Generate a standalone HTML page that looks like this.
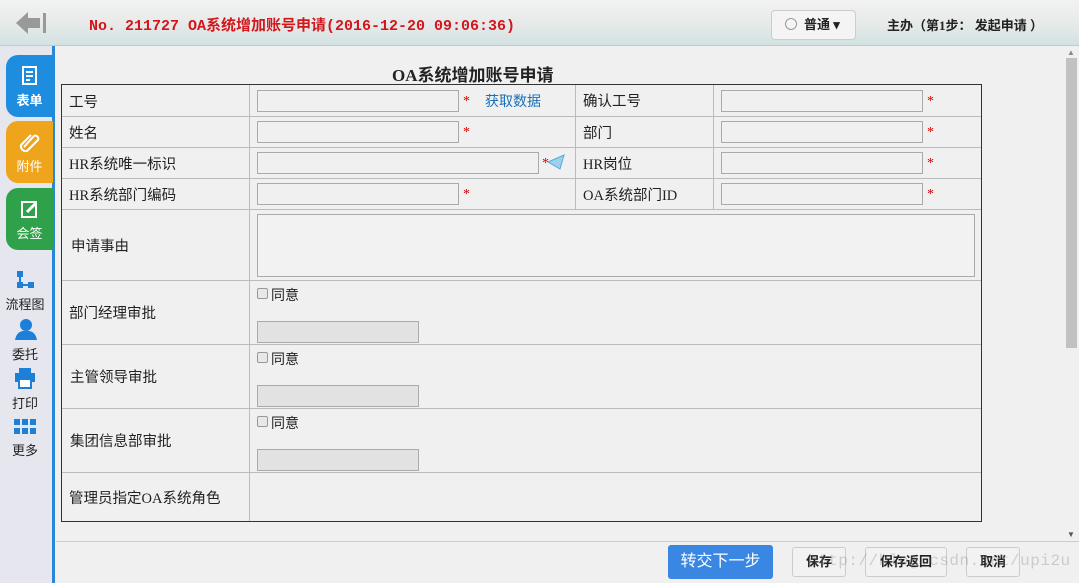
<!DOCTYPE html>
<html><head><meta charset="utf-8"><style>
*{margin:0;padding:0;box-sizing:border-box}
body{width:1079px;height:583px;overflow:hidden;background:#f0f0f0;font-family:"Liberation Serif","Noto Sans CJK SC",sans-serif;font-size:14px;color:#222;position:relative}
.a{position:absolute}
.hd{left:0;top:0;width:1079px;height:46px;background:linear-gradient(#f2f2f2,#e8eaea 50%,#d3e2e2);border-bottom:1px solid #c8c8c8}
.title{left:89px;top:14px;color:#d2161b;font-weight:bold;font-family:"Liberation Mono","Noto Sans CJK SC",monospace;font-size:15px}
.side{left:0;top:46px;width:55px;height:537px;background:#e6e6ef;border-right:3px solid #2a87d8}
.tab{left:6px;width:47px;height:62px;border-radius:12px 0 0 12px;color:#fff;text-align:center;font-size:13px;font-family:"Liberation Sans","Noto Sans CJK SC",sans-serif}
.ic{left:0;width:50px;text-align:center;font-size:13px;color:#222}
.ln{background:#bbb}
.inp{height:22px;border:1px solid #aaa;background:#f0f0f0}
.st{color:#c00;font-size:14px}
.lb{font-size:14.5px}
.btn{top:547px;height:30px;border:1px solid #ccc;border-radius:3px;background:#f2f2f2;font-weight:bold;font-size:13px;text-align:center;line-height:28px}
</style></head><body>
<div class="a hd"></div>
<svg class="a" style="left:14px;top:10px" width="34" height="26"><polygon points="2,13 14,2 14,8 26,8 26,18 14,18 14,24" fill="#999"/><rect x="29" y="3" width="3" height="20" fill="#999"/></svg>
<div class="a title">No. 211727 OA系统增加账号申请(2016-12-20 09:06:36)</div>
<div class="a" style="left:771px;top:10px;width:85px;height:30px;border:1px solid #ccc;border-radius:4px;background:#f4f4f4;font-weight:bold;font-size:13px;line-height:28px;padding-left:32px">普通 ▾</div>
<div class="a" style="left:785px;top:18px;width:12px;height:12px;border:1px solid #999;border-radius:50%"></div>
<div class="a" style="left:887px;top:15px;font-weight:bold;font-size:13px">主办（第1步：&nbsp;发起申请 ）</div>
<div class="a side"></div>
<div class="a tab" style="top:55px;background:#1e8de0">
<svg width="20" height="22" style="margin-top:10px"><rect x="3" y="2" width="13" height="17" fill="none" stroke="#fff" stroke-width="2"/><path d="M6 7h7M6 11h7M6 15h4" stroke="#fff" stroke-width="2"/></svg><div style="font-weight:bold">表单</div></div>
<div class="a tab" style="top:121px;background:#eea51c">
<svg width="24" height="22" style="margin-top:10px"><path d="M6 16 L16 5 a3 3 0 0 1 4 4 L9 20 a5 5 0 0 1 -6 -6 L13 4" fill="none" stroke="#fff" stroke-width="2"/></svg><div>附件</div></div>
<div class="a tab" style="top:188px;background:#2fa14a">
<svg width="22" height="22" style="margin-top:10px"><rect x="3" y="4" width="14" height="15" fill="none" stroke="#fff" stroke-width="2"/><path d="M8 14 L17 5" stroke="#fff" stroke-width="3"/></svg><div>会签</div></div>
<div class="a ic" style="top:270px"><svg width="22" height="20"><rect x="3" y="1" width="6" height="6" fill="#1e7fd8"/><rect x="3" y="12" width="6" height="6" fill="#1e7fd8"/><rect x="14" y="12" width="6" height="6" fill="#1e7fd8"/><path d="M6 7v8h8" stroke="#1e7fd8" stroke-width="2" fill="none"/></svg><div>流程图</div></div>
<div class="a ic" style="top:318px"><svg width="24" height="22"><circle cx="13" cy="7" r="6" fill="#1e7fd8"/><path d="M2 22 Q4 12 13 13 Q22 12 24 22Z" fill="#1e7fd8"/></svg><div>委托</div></div>
<div class="a ic" style="top:367px"><svg width="24" height="22"><rect x="6" y="1" width="12" height="5" fill="#1e7fd8"/><rect x="2" y="6" width="20" height="9" fill="#1e7fd8"/><rect x="6" y="12" width="12" height="9" fill="#fff" stroke="#1e7fd8" stroke-width="2"/></svg><div>打印</div></div>
<div class="a ic" style="top:418px"><svg width="24" height="18"><g fill="#1e7fd8"><rect x="1" y="1" width="6" height="6"/><rect x="9" y="1" width="6" height="6"/><rect x="17" y="1" width="6" height="6"/><rect x="1" y="10" width="6" height="6"/><rect x="9" y="10" width="6" height="6"/><rect x="17" y="10" width="6" height="6"/></g></svg><div>更多</div></div>

<div class="a" style="left:392px;top:61px;font-size:17px;font-weight:bold;font-family:'Liberation Serif','Noto Sans CJK SC',serif">OA系统增加账号申请</div>
<div class="a" style="left:61px;top:84px;width:921px;height:438px;border:1px solid #333"></div>
<div class="a ln" style="left:62px;top:116px;width:919px;height:1px"></div>
<div class="a ln" style="left:62px;top:147px;width:919px;height:1px"></div>
<div class="a ln" style="left:62px;top:178px;width:919px;height:1px"></div>
<div class="a ln" style="left:62px;top:209px;width:919px;height:1px"></div>
<div class="a ln" style="left:62px;top:280px;width:919px;height:1px"></div>
<div class="a ln" style="left:62px;top:344px;width:919px;height:1px"></div>
<div class="a ln" style="left:62px;top:408px;width:919px;height:1px"></div>
<div class="a ln" style="left:62px;top:472px;width:919px;height:1px"></div>
<div class="a ln" style="left:249px;top:85px;width:1px;height:436px"></div>
<div class="a ln" style="left:575px;top:85px;width:1px;height:124px"></div>
<div class="a ln" style="left:713px;top:85px;width:1px;height:124px"></div>
<div class="a lb" style="left:69px;top:91px">工号</div>
<div class="a lb" style="left:69px;top:122px">姓名</div>
<div class="a lb" style="left:69px;top:153px">HR系统唯一标识</div>
<div class="a lb" style="left:69px;top:184px">HR系统部门编码</div>
<div class="a lb" style="left:71px;top:235px">申请事由</div>
<div class="a lb" style="left:69px;top:302px">部门经理审批</div>
<div class="a lb" style="left:70px;top:366px">主管领导审批</div>
<div class="a lb" style="left:70px;top:430px">集团信息部审批</div>
<div class="a lb" style="left:69px;top:487px">管理员指定OA系统角色</div>
<div class="a lb" style="left:583px;top:90px">确认工号</div>
<div class="a lb" style="left:583px;top:122px">部门</div>
<div class="a lb" style="left:583px;top:153px">HR岗位</div>
<div class="a lb" style="left:583px;top:184px">OA系统部门ID</div>
<div class="a inp" style="left:257px;top:90px;width:202px"></div><div class="a st" style="left:463px;top:94px">*</div>
<div class="a" style="left:485px;top:91px;color:#1a6fb8;font-size:14px">获取数据</div>
<div class="a inp" style="left:257px;top:121px;width:202px"></div><div class="a st" style="left:463px;top:125px">*</div>
<div class="a inp" style="left:257px;top:152px;width:282px"></div><div class="a st" style="left:542px;top:156px">*</div>
<svg class="a" style="left:546px;top:153px" width="20" height="18"><path d="M2 9 L18 2 L14 16Z" fill="#9cd0ef" stroke="#5aa8d8"/></svg>
<div class="a inp" style="left:257px;top:183px;width:202px"></div><div class="a st" style="left:463px;top:187px">*</div>
<div class="a inp" style="left:721px;top:90px;width:202px"></div><div class="a st" style="left:927px;top:94px">*</div>
<div class="a inp" style="left:721px;top:121px;width:202px"></div><div class="a st" style="left:927px;top:125px">*</div>
<div class="a inp" style="left:721px;top:152px;width:202px"></div><div class="a st" style="left:927px;top:156px">*</div>
<div class="a inp" style="left:721px;top:183px;width:202px"></div><div class="a st" style="left:927px;top:187px">*</div>
<div class="a inp" style="left:257px;top:214px;width:718px;height:63px;background:#f2f2f2"></div>
<div class="a" style="left:257px;top:288px;width:11px;height:11px;border:1px solid #999;border-radius:2px;background:#e8e8e8"></div><div class="a" style="left:271px;top:285px;font-size:14px">同意</div>
<div class="a inp" style="left:257px;top:321px;width:162px;background:#e2e2e2"></div>
<div class="a" style="left:257px;top:352px;width:11px;height:11px;border:1px solid #999;border-radius:2px;background:#e8e8e8"></div><div class="a" style="left:271px;top:349px;font-size:14px">同意</div>
<div class="a inp" style="left:257px;top:385px;width:162px;background:#e2e2e2"></div>
<div class="a" style="left:257px;top:416px;width:11px;height:11px;border:1px solid #999;border-radius:2px;background:#e8e8e8"></div><div class="a" style="left:271px;top:413px;font-size:14px">同意</div>
<div class="a inp" style="left:257px;top:449px;width:162px;background:#e2e2e2"></div>
<div class="a" style="left:1063px;top:46px;width:16px;height:496px;background:#f0f0f0"></div>
<div class="a" style="left:1066px;top:58px;width:11px;height:290px;background:#c1c1c1"></div>
<div class="a" style="left:1067px;top:48px;color:#888;font-size:8px">▲</div>
<div class="a" style="left:1067px;top:530px;color:#555;font-size:8px">▼</div>
<div class="a" style="left:56px;top:541px;width:1023px;height:1px;background:#ccc"></div>
<div class="a" style="left:668px;top:545px;width:105px;height:34px;background:#3a86e3;border-radius:3px;color:#fff;font-size:16px;text-align:center;line-height:34px">转交下一步</div>
<div class="a btn" style="left:792px;width:54px">保存</div>
<div class="a btn" style="left:865px;width:82px">保存返回</div>
<div class="a btn" style="left:966px;width:54px">取消</div>
<div class="a" style="left:808px;top:552px;color:rgba(120,120,120,.3);font-size:16px;font-family:'Liberation Mono',monospace;letter-spacing:0.5px">http://blog.csdn.net/upi2u</div>
</body></html>
